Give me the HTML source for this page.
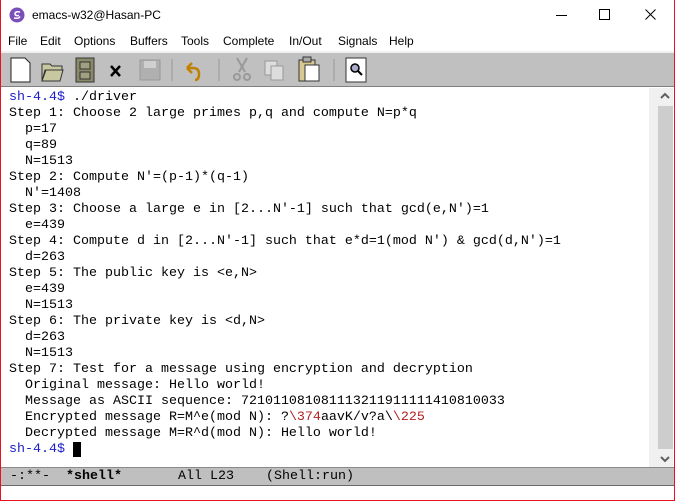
<!DOCTYPE html>
<html><head><style>
*{margin:0;padding:0;box-sizing:border-box}
body{width:675px;height:501px;overflow:hidden;background:#fff;font-family:"Liberation Sans",sans-serif;position:relative}
.frame{position:absolute;inset:0;border:1px solid #e81123;border-top:none}
.title{position:absolute;left:0;top:0;width:675px;height:31px;font-size:12px;color:#000}
.title .t{position:absolute;left:32px;top:8px}
.menu{position:absolute;left:0;top:32px;height:18px;font-size:12px}
.menu span{position:absolute;top:2px;white-space:nowrap}
.tb{position:absolute;left:1px;top:51px;width:673px;height:36px;background:#c0c0c0;border-top:2px solid #f0f0f0;border-bottom:1px solid #808080}
.txt{position:absolute;left:9px;top:90px;font-family:"Liberation Mono",monospace;font-size:13.33px;line-height:16px;white-space:pre;color:#000}
.b{color:#1a1acd}.r{color:#b22222}
.sb{position:absolute;left:649px;top:88px;width:24px;height:379px;background:#f0f0f0}
.thumb{position:absolute;left:658px;top:106px;width:15px;height:343px;background:#cdcdcd}
.mode{position:absolute;left:1px;top:467px;width:673px;height:19px;background:#bfbfbf;border-top:1px solid #8a8a8a;border-bottom:1px solid #6a6a6a;font-family:"Liberation Mono",monospace;font-size:13.33px;line-height:17px;white-space:pre;padding-left:9px}
</style></head><body>
<div class="title">
<svg style="position:absolute;left:9px;top:7px" width="16" height="16"><circle cx="8" cy="8" r="7.5" fill="#7b4fb8"/><path d="M11 5 Q6 4 6 7 Q6 9 10 8.5 M5 11 Q10 12 11 9.5" stroke="#fff" stroke-width="1.5" fill="none"/></svg>
<span class="t">emacs-w32@Hasan-PC</span>
<svg style="position:absolute;left:556px;top:15px" width="12" height="2"><rect width="11" height="1" fill="#000"/></svg>
<svg style="position:absolute;left:599px;top:9px" width="12" height="12"><rect x="0.5" y="0.5" width="10" height="10" fill="none" stroke="#000"/></svg>
<svg style="position:absolute;left:645px;top:9px" width="12" height="12"><path d="M0.5 .5L10.5 10.5M10.5 .5L.5 10.5" stroke="#000"/></svg>
</div>
<div class="menu">
<span style="left:8px">File</span><span style="left:40px">Edit</span><span style="left:74px">Options</span><span style="left:130px">Buffers</span><span style="left:181px">Tools</span><span style="left:223px">Complete</span><span style="left:289px">In/Out</span><span style="left:338px">Signals</span><span style="left:389px">Help</span>
</div>
<div class="tb">
<svg width="380" height="34" style="position:absolute;left:0;top:0">
<path d="M10 5h14l5 5v19H10z" fill="#fff" stroke="#222"/>
<path d="M41 11h8l2 2h10v4H44l-3 11z M41 28l4-11h17l-3 11z" fill="#c8c8a0" stroke="#333"/>
<rect x="75" y="5" width="18" height="24" fill="#8a8a6a" stroke="#333"/><rect x="79" y="9" width="10" height="7" fill="#a0a080" stroke="#333"/><rect x="79" y="19" width="10" height="7" fill="#a0a080" stroke="#333"/>
<path d="M110 13l9 10M119 13l-9 10" stroke="#000" stroke-width="2.5"/>
<rect x="139" y="7" width="20" height="20" fill="#b0b0b0" stroke="#999"/><rect x="143" y="8" width="12" height="7" fill="#d0d0d0"/>
<line x1="171" y1="6" x2="171" y2="28" stroke="#999"/>
<path d="M186 15h6q6 0 6 6t-4 6M186 15l5-5M186 15l5 5" stroke="#c08000" stroke-width="2.5" fill="none"/>
<line x1="218" y1="6" x2="218" y2="28" stroke="#999"/>
<path d="M236 5l8 14M246 5l-8 14" stroke="#999" stroke-width="2"/><circle cx="236" cy="24" r="3" fill="none" stroke="#999" stroke-width="2"/><circle cx="246" cy="24" r="3" fill="none" stroke="#999" stroke-width="2"/>
<rect x="264" y="8" width="12" height="14" fill="#ddd" stroke="#999"/><rect x="270" y="13" width="12" height="14" fill="#ddd" stroke="#999"/>
<rect x="298" y="7" width="16" height="21" fill="#d8c890" stroke="#333"/><rect x="304" y="12" width="14" height="16" fill="#fff" stroke="#333"/><rect x="302" y="4" width="8" height="5" fill="#aaa" stroke="#333"/>
<line x1="333" y1="6" x2="333" y2="28" stroke="#999"/>
<rect x="345" y="5" width="20" height="24" fill="#fff" stroke="#333"/><circle cx="354" cy="15" r="4" fill="#aac" stroke="#000" stroke-width="1.5"/><path d="M357 18l4 4" stroke="#000" stroke-width="2"/>
</svg>
</div>
<div class="txt"><span class="b">sh-4.4$</span> ./driver
Step 1: Choose 2 large primes p,q and compute N=p*q
  p=17
  q=89
  N=1513
Step 2: Compute N'=(p-1)*(q-1)
  N'=1408
Step 3: Choose a large e in [2...N'-1] such that gcd(e,N')=1
  e=439
Step 4: Compute d in [2...N'-1] such that e*d=1(mod N') &amp; gcd(d,N')=1
  d=263
Step 5: The public key is &lt;e,N&gt;
  e=439
  N=1513
Step 6: The private key is &lt;d,N&gt;
  d=263
  N=1513
Step 7: Test for a message using encryption and decryption
  Original message: Hello world!
  Message as ASCII sequence: 721011081081113211911111410810033
  Encrypted message R=M^e(mod N): ?<span class="r">\374</span>aavK/v?a\<span class="r">\225</span>
  Decrypted message M=R^d(mod N): Hello world!
<span class="b">sh-4.4$</span> <span style="background:#000"> </span></div>
<div class="sb"></div><div class="thumb"></div>
<svg style="position:absolute;left:659px;top:92px" width="12" height="8"><path d="M2 6l4-4 4 4" stroke="#606060" stroke-width="2" fill="none"/></svg>
<svg style="position:absolute;left:659px;top:455px" width="12" height="8"><path d="M2 2l4 4 4-4" stroke="#606060" stroke-width="2" fill="none"/></svg>
<div class="mode">-:**-  <b>*shell*</b>       All L23    (Shell:run)</div>
<div class="frame"></div>
</body></html>
